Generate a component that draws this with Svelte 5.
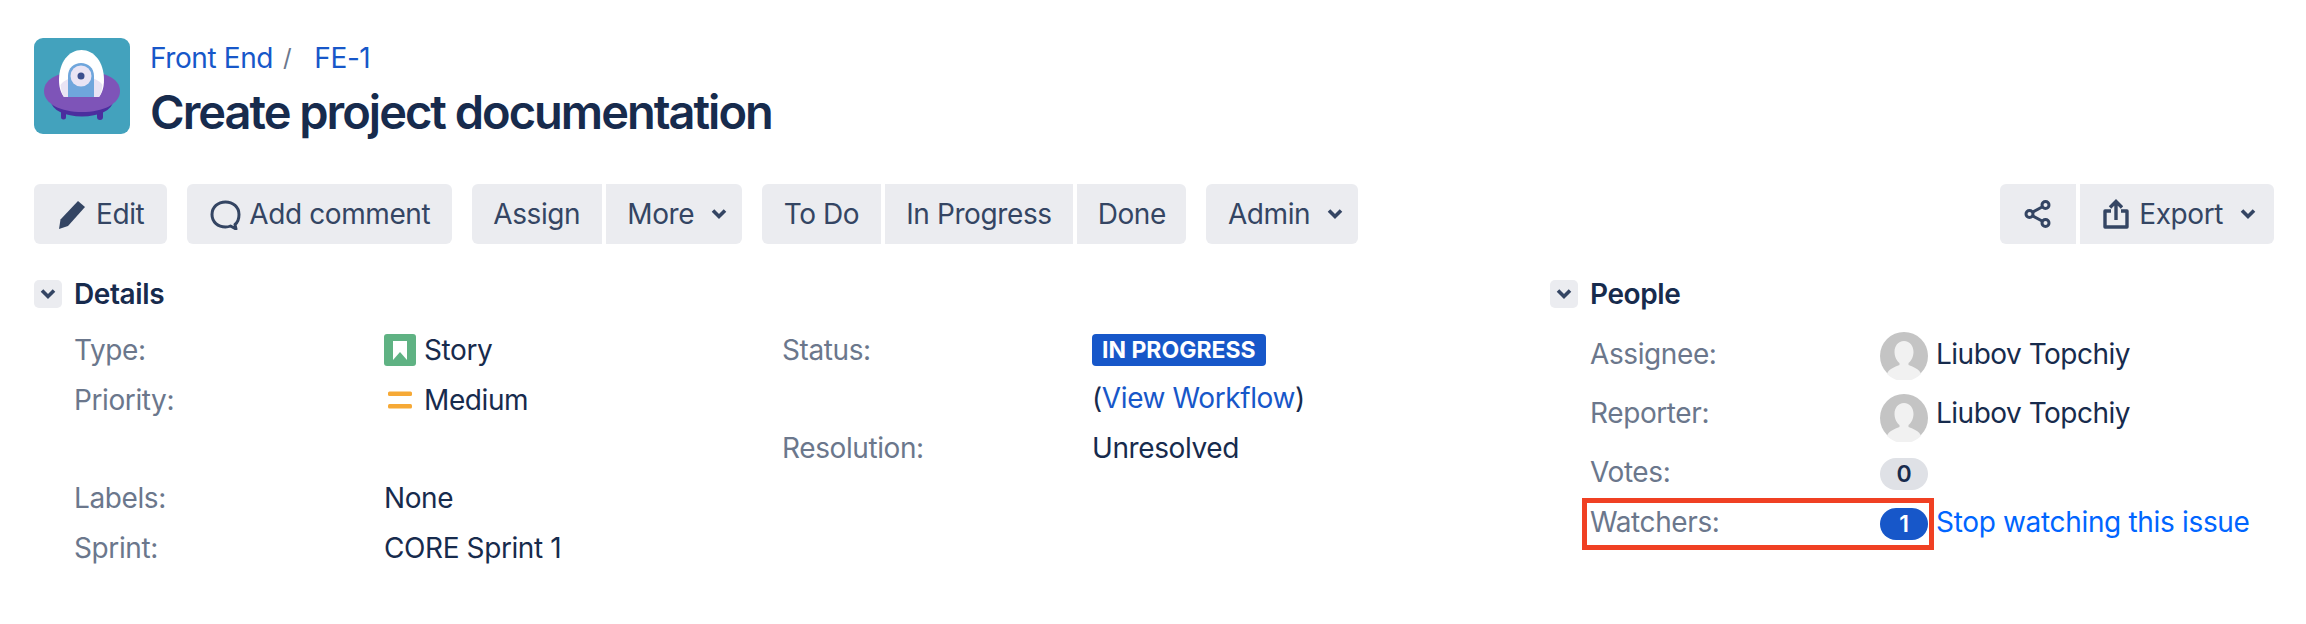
<script>
  const chevron = "M3 5.5 L9 11.5 L15 5.5";
  const leftA = [
    { label: "Type:", kind: "story", value: "Story" },
    { label: "Priority:", kind: "medium", value: "Medium" }
  ];
  const leftB = [
    { label: "Labels:", value: "None" },
    { label: "Sprint:", value: "CORE Sprint 1" }
  ];
</script>

<div class="page">
  <header class="head">
    <svg class="logo" viewBox="0 0 96 96" aria-hidden="true">
      <rect width="96" height="96" rx="9" fill="#43a2bd" />
      <path d="M27 68h5v11a2.500 2.500 0 0 1-5 0zM63 68h6v11a3 3 0 0 1-6 0z" fill="#4b2e9e" />
      <ellipse cx="48" cy="63" rx="31" ry="15.500" fill="#4b2e9e" />
      <path d="M10 53C10 40 27 33 48 33S86 40 86 53 69 74 48 74 10 66 10 53Z" fill="#7e54b8" />
      <path d="M25 42C25 24 35 12 47.500 12S70 24 70 42C70 50 68 55 65 59H30C27 55 25 50 25 42Z" fill="#fff" />
      <path d="M26.500 47C33 36 62 36 68.500 47C68 52 67 56 65 59H30C28 56 27 52 26.500 47Z" fill="#e9e4f4" />
      <path d="M34 59V38C34 30 40 25 47 25S60 30 60 38V59Z" fill="#6fa6dc" />
      <circle cx="47" cy="38" r="10.500" fill="#e9e4f4" />
      <circle cx="47" cy="38" r="3.500" fill="#3b4f8f" />
    </svg>
    <div class="titles">
      <nav class="crumbs"><a href="#a">Front End</a><span class="sep">/</span><a href="#b">FE-1</a></nav>
      <h1>Create project documentation</h1>
    </div>
  </header>

  <div class="toolbar">
    <div class="group"><button class="edit">
      <svg class="ico" viewBox="0 0 32 32"><path d="M22 3l7 6L12 28 3 31l1.500-9.500z" fill="#344563" /></svg>Edit</button></div>
    <div class="group"><button>
      <svg class="ico" viewBox="0 0 32 32"><path d="M26 26.500C29 24 30 20 30 16.500 30 9 24 4 16.500 4S3 9 3 16.500 9 29 16.500 29c2 0 3.500-.3 5-1l5.500 3z" fill="none" stroke="#344563" stroke-width="3" stroke-linejoin="round" /></svg>Add comment</button></div>
    <div class="group"><button>Assign</button><button class="drop">More
      <svg class="chev" viewBox="0 0 18 18"><path d={chevron} /></svg></button></div>
    <div class="group"><button>To Do</button><button>In Progress</button><button class="done">Done</button></div>
    <div class="group"><button class="drop">Admin
      <svg class="chev" viewBox="0 0 18 18"><path d={chevron} /></svg></button></div>
    <div class="group right">
      <button class="share" aria-label="Share">
        <svg class="ico" viewBox="0 0 32 32" fill="none" stroke="#344563" stroke-width="3"><circle cx="23.500" cy="7" r="3.500" /><circle cx="7.500" cy="16" r="3.500" /><circle cx="23.500" cy="25" r="3.500" /><path d="M10.500 14.300 20.500 8.700M10.500 17.700 20.500 23.300" /></svg>
      </button>
      <button class="drop export">
        <svg class="ico" viewBox="0 0 32 32" fill="none" stroke="#344563" stroke-width="3.400"><path d="M14 22V4M8 9.500 14 3.500 20 9.500" /><path d="M9 13H3v16h22V13h-6" stroke-linejoin="round" /></svg>Export
        <svg class="chev" viewBox="0 0 18 18"><path d={chevron} /></svg></button>
    </div>
  </div>

  <div class="main">
    <section>
      <div class="sec-head">
        <span class="toggle"><svg class="chev" viewBox="0 0 18 18"><path d={chevron} /></svg></span>
        <h2>Details</h2>
      </div>
      <div class="detail-cols">
        <div class="col">
          <div class="block">
            {#each leftA as row}
              <div class="row">
                <span class="lbl">{row.label}</span>
                <span class="val">
                  {#if row.kind === "story"}
                    <svg class="type-ico" viewBox="0 0 32 32"><rect width="32" height="32" rx="3" fill="#5fb283" /><path d="M9 7h14v19l-7-8-7 8z" fill="#fff" /></svg>
                  {:else}
                    <svg class="type-ico" viewBox="0 0 32 32"><rect x="4" y="7.500" width="24" height="4.500" rx="1.500" fill="#f6a936" /><rect x="4" y="20" width="24" height="4.500" rx="1.500" fill="#f6a936" /></svg>
                  {/if}
                  {row.value}
                </span>
              </div>
            {/each}
          </div>
          <div class="block second">
            {#each leftB as row}
              <div class="row"><span class="lbl">{row.label}</span><span class="val">{row.value}</span></div>
            {/each}
          </div>
        </div>
        <div class="col status-col">
          <div class="row"><span class="lbl">Status:</span><span class="val"><span class="status">IN PROGRESS</span></span></div>
          <div class="row"><span class="lbl"></span><span class="val">(<a href="#c">View Workflow</a>)</span></div>
          <div class="row last"><span class="lbl">Resolution:</span><span class="val">Unresolved</span></div>
        </div>
      </div>
    </section>

    <section class="people">
      <div class="sec-head">
        <span class="toggle"><svg class="chev" viewBox="0 0 18 18"><path d={chevron} /></svg></span>
        <h2>People</h2>
      </div>
      <div class="people-rows">
        {#each ["Assignee:", "Reporter:"] as label, i}
          <div class="prow user" class:rep={i === 1}>
            <span class="plbl">{label}</span>
            <svg class="avatar" viewBox="0 0 48 48"><circle cx="24" cy="24" r="24" fill="#c4c4c4" /><path d="M24 9c6 0 9.500 5 9.500 11 0 5-2.500 9-5 11v2c5 2 11 4 12.500 9a24 24 0 0 1-34 0c1.500-5 7.500-7 12.500-9v-2c-2.500-2-5-6-5-11 0-6 3.500-11 9.500-11z" fill="#f1f1f1" /></svg>
            <span class="name">Liubov Topchiy</span>
          </div>
        {/each}
        <div class="prow votes">
          <span class="plbl">Votes:</span>
          <span class="count">0</span>
        </div>
        <div class="prow watchers">
          <span class="highlight"></span>
          <span class="plbl">Watchers:</span>
          <span class="count on">1</span>
          <a class="stop" href="#d">Stop watching this issue</a>
        </div>
      </div>
    </section>
  </div>
</div>

<style>
  :global(body) {
    margin: 0;
    background: #fff;
    font-family: Inter, "Liberation Sans", sans-serif;
    color: #172b4d;
  }
  .page {
    box-sizing: border-box;
    width: 2306px;
    height: 624px;
    padding: 38px 32px 0 34px;
    font-size: 28px;
    letter-spacing: -0.4px;
  }
  .head {
    display: flex;
    gap: 20px;
    height: 96px;
  }
  .logo {
    width: 96px;
    height: 96px;
    flex: none;
  }
  .titles {
    padding-top: 3px;
  }
  .crumbs {
    display: flex;
    align-items: center;
    height: 34px;
    line-height: 34px;
  }
  a {
    color: #1757c9;
    text-decoration: none;
  }
  .sep {
    margin: 0 23px 0 10px;
    color: #6b778c;
    font-size: 24px;
  }
  h1 {
    margin: 9px 0 0;
    font-size: 47px;
    line-height: 56px;
    font-weight: 600;
    color: #172b4d;
    letter-spacing: -2px;
  }
  .toolbar {
    display: flex;
    gap: 20px;
    margin-top: 50px;
  }
  .group {
    display: flex;
    gap: 4px;
    border-radius: 6px;
    overflow: hidden;
  }
  .right {
    margin-left: auto;
  }
  button {
    display: flex;
    align-items: center;
    height: 60px;
    padding: 0 21.5px;
    border: 0;
    background: #ebecf0;
    color: #344563;
    font: inherit;
    letter-spacing: inherit;
  }
  .edit {
    padding-right: 23px;
  }
  .done {
    padding: 0 20.5px;
  }
  .drop {
    padding-right: 14px;
  }
  .ico {
    width: 32px;
    height: 32px;
    margin: 0 8px 0 0.5px;
  }
  .export {
    padding-right: 17px;
  }
  .export .ico {
    margin-right: 5px;
  }
  .share {
    width: 76px;
    justify-content: center;
    padding: 0;
  }
  .share .ico {
    margin: 0;
  }
  .chev {
    width: 18px;
    height: 18px;
    margin-left: 16px;
  }
  .chev path {
    fill: none;
    stroke: #344563;
    stroke-width: 3.600;
  }
  .main {
    display: grid;
    grid-template-columns: 1516px 1fr;
    margin-top: 36px;
  }
  .sec-head {
    display: flex;
    align-items: center;
    gap: 12px;
    height: 28px;
  }
  .toggle {
    display: flex;
    align-items: center;
    justify-content: center;
    width: 28px;
    height: 28px;
    background: #ebecf0;
    border-radius: 5px;
  }
  .toggle .chev {
    margin: 0;
  }
  h2 {
    margin: 0;
    font-size: 28px;
    font-weight: 600;
    line-height: 28px;
  }
  .detail-cols {
    display: grid;
    grid-template-columns: 708px 1fr;
    padding: 22px 0 0 40px;
  }
  .col,
  .block {
    display: flex;
    flex-direction: column;
    gap: 10px;
  }
  .block.second {
    margin-top: 48px;
  }
  .row {
    display: grid;
    grid-template-columns: 310px 1fr;
    align-items: center;
    height: 40px;
  }
  .status-col {
    gap: 8px;
  }
  .last {
    margin-top: 2px;
  }
  .lbl,
  .plbl {
    color: #6b778c;
  }
  .val {
    display: flex;
    align-items: center;
  }
  .type-ico {
    width: 32px;
    height: 32px;
    margin-right: 8px;
  }
  .status {
    display: block;
    padding: 0 10px;
    height: 32px;
    line-height: 32px;
    background: #1757c9;
    color: #fff;
    border-radius: 4px;
    font-size: 23px;
    font-weight: 700;
    letter-spacing: 0;
  }
  .people-rows {
    display: grid;
    padding: 24px 0 0 40px;
  }
  .prow {
    position: relative;
    display: flex;
    align-items: center;
  }
  .plbl {
    width: 290px;
    flex: none;
    padding-bottom: 4px;
  }
  .user {
    height: 48px;
    margin-bottom: 14px;
  }
  .rep .plbl,
  .rep .name {
    padding-bottom: 10px;
  }
  .avatar {
    width: 48px;
    height: 48px;
    flex: none;
    margin-right: 8px;
  }
  .name {
    padding-bottom: 4px;
    letter-spacing: -0.5px;
  }
  .votes {
    height: 32px;
    margin-top: 2px;
  }
  .watchers {
    height: 32px;
    margin-top: 18px;
  }
  .count {
    width: 48px;
    height: 32px;
    line-height: 32px;
    flex: none;
    text-align: center;
    border-radius: 16px;
    background: #dfe1e6;
    font-size: 23px;
    font-weight: 600;
    margin-right: 8px;
  }
  .count.on {
    background: #1757c9;
    color: #fff;
  }
  .stop {
    color: #0065ff;
    white-space: nowrap;
    padding-bottom: 4px;
    letter-spacing: -0.33px;
  }
  .highlight {
    position: absolute;
    box-sizing: border-box;
    left: -8px;
    top: -10px;
    width: 352px;
    height: 52px;
    border: 5px solid #f04023;
  }
</style>
